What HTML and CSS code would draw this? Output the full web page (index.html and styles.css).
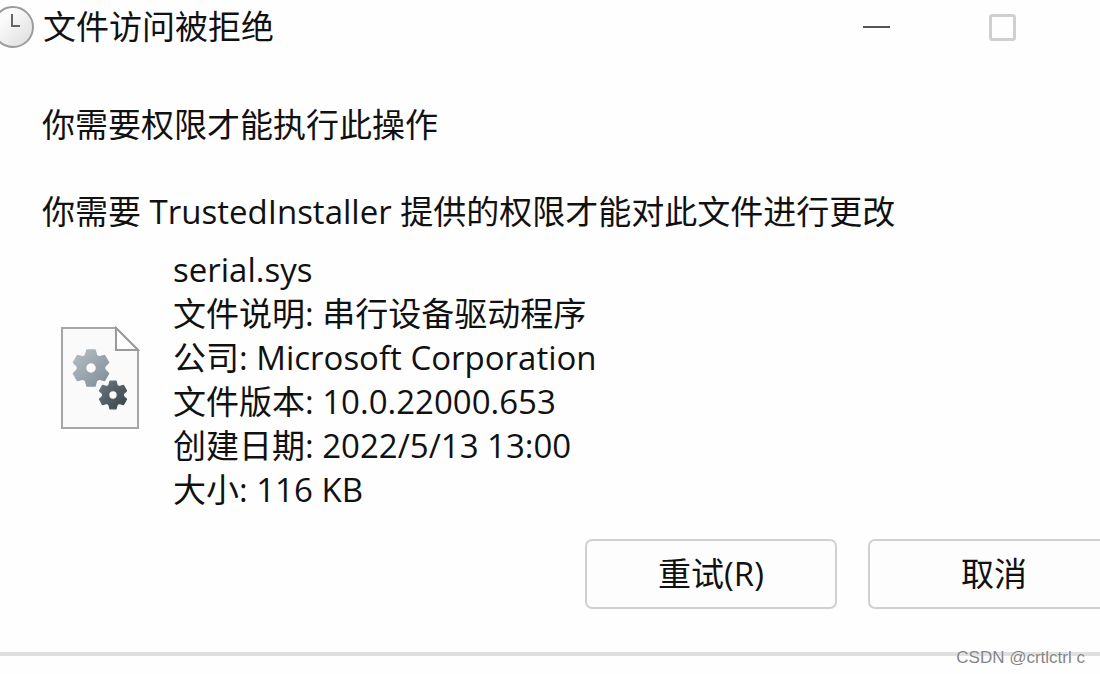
FILE: index.html
```html
<!DOCTYPE html>
<html lang="zh-CN">
<head>
<meta charset="utf-8">
<title>文件访问被拒绝</title>
<link rel="stylesheet" href="styles.css">
</head>
<body>
<main class="dialog">
  <header class="titlebar">
    <svg class="clock" viewBox="0 0 44 44" aria-hidden="true">
      <defs>
        <linearGradient id="clock-face" x1="0" y1="0" x2="1" y2="1"><stop offset="0.3" stop-color="#fafafa"/><stop offset="1" stop-color="#dcdcdc"/></linearGradient>
      </defs>
      <circle cx="22" cy="22" r="20" fill="url(#clock-face)" stroke="#9c9c9c" stroke-width="2"/>
      <path d="M21 9V21H29" fill="none" stroke="#666" stroke-width="2"/>
    </svg>
    <h1 class="title">文件访问被拒绝</h1>
    <button class="window-button" aria-label="最小化"><svg viewBox="0 0 30 30"><path d="M1 15H28" stroke="#555" stroke-width="2"/></svg></button>
    <button class="window-button" aria-label="最大化" disabled><svg viewBox="0 0 30 30"><rect x="2.5" y="3.5" width="24" height="24" rx="2" fill="none" stroke="#cfcfcf" stroke-width="3"/></svg></button>
  </header>
  <section class="content">
    <p class="message">你需要权限才能执行此操作</p>
    <p class="message">你需要 TrustedInstaller 提供的权限才能对此文件进行更改</p>
    <div class="file">
      <svg class="file-icon" viewBox="0 0 80 104" aria-hidden="true">
        <defs>
          <linearGradient id="gear-light" gradientUnits="userSpaceOnUse" x1="-14" y1="-14" x2="14" y2="14"><stop offset="0" stop-color="#b0bac2"/><stop offset="1" stop-color="#84909b"/></linearGradient>
          <linearGradient id="gear-dark" gradientUnits="userSpaceOnUse" x1="-14" y1="-14" x2="14" y2="14"><stop offset="0" stop-color="#66727a"/><stop offset="1" stop-color="#3c474e"/></linearGradient>
          <path id="gear" fill-rule="evenodd" stroke-linejoin="round" stroke-width="1.5" d="M-4 -18H4L5.500 -12.500L8 -11L13.600 -12.500L17.600 -5.500L13.600 -1.500V1.500L17.600 5.500L13.600 12.500L8 11L5.500 12.500L4 18H-4L-5.500 12.500L-8 11L-13.600 12.500L-17.600 5.500L-13.600 1.500V-1.500L-17.600 -5.500L-13.600 -12.500L-8 -11L-5.500 -12.500ZM5.500 0A5.500 5.500 0 1 0 -5.500 0A5.500 5.500 0 1 0 5.500 0Z"/>
        </defs>
        <path d="M2 2H56L78 24V102H2Z" fill="#fafafa" stroke="#a6a6a6" stroke-width="2"/>
        <path d="M56 2V24H78Z" fill="#fff" stroke="#9a9a9a" stroke-width="2"/>
        <use href="#gear" transform="translate(31 42)" fill="url(#gear-light)" stroke="url(#gear-light)"/>
        <use href="#gear" transform="translate(53 69) scale(.77)" fill="url(#gear-dark)" stroke="url(#gear-dark)"/>
      </svg>
      <ul class="details">
        <li>serial.sys</li>
        <li>文件说明: 串行设备驱动程序</li>
        <li>公司: Microsoft Corporation</li>
        <li>文件版本: 10.0.22000.653</li>
        <li>创建日期: 2022/5/13 13:00</li>
        <li>大小: 116 KB</li>
      </ul>
    </div>
  </section>
  <div class="actions">
    <button class="action">重试(R)</button>
    <button class="action">取消</button>
  </div>
  <footer class="edge"><span class="credit">CSDN @crtlctrl c</span></footer>
</main>
</body>
</html>
```
FILE: styles.css
```css
* { box-sizing: border-box; }
body { margin: 0; background: #fefefe; color: #111; font: 33px/44px "Open Sans", "Noto Sans CJK SC", sans-serif; overflow-x: hidden; }
.titlebar { display: flex; align-items: center; height: 54px; padding-right: 82px; }
.clock { width: 44px; height: 44px; margin-left: -9px; }
.title { flex: 1; margin: 0 0 0 8px; font-size: 33px; font-weight: 400; }
.window-button { display: flex; padding: 0; border: 0; background: none; margin-left: 96px; }
.window-button svg { width: 30px; height: 30px; }
.content { padding: 49px 42px 0; }
.message { margin: 0 0 43px; }
.message + .message { margin-bottom: 14px; }
.file { display: flex; align-items: center; }
.file-icon { width: 80px; height: 104px; margin: 0 33px 4px 18px; }
.details { margin: 0; padding: 0; list-style: none; }
.actions { display: flex; justify-content: flex-end; gap: 31px; margin: 27px -20px 0 0; }
.action { width: 252px; height: 70px; border: 2px solid #d0d0d0; border-radius: 7px; background: #fdfdfd; color: inherit; font: inherit; }
.edge { position: relative; height: 22px; margin-top: 43px; border-top: 4px solid #dfdfdf; }
.credit { position: absolute; top: -8px; right: 15px; color: #858585; font: 17px/20px "Liberation Sans", sans-serif; text-shadow: 0 0 2px #fff; }
```
